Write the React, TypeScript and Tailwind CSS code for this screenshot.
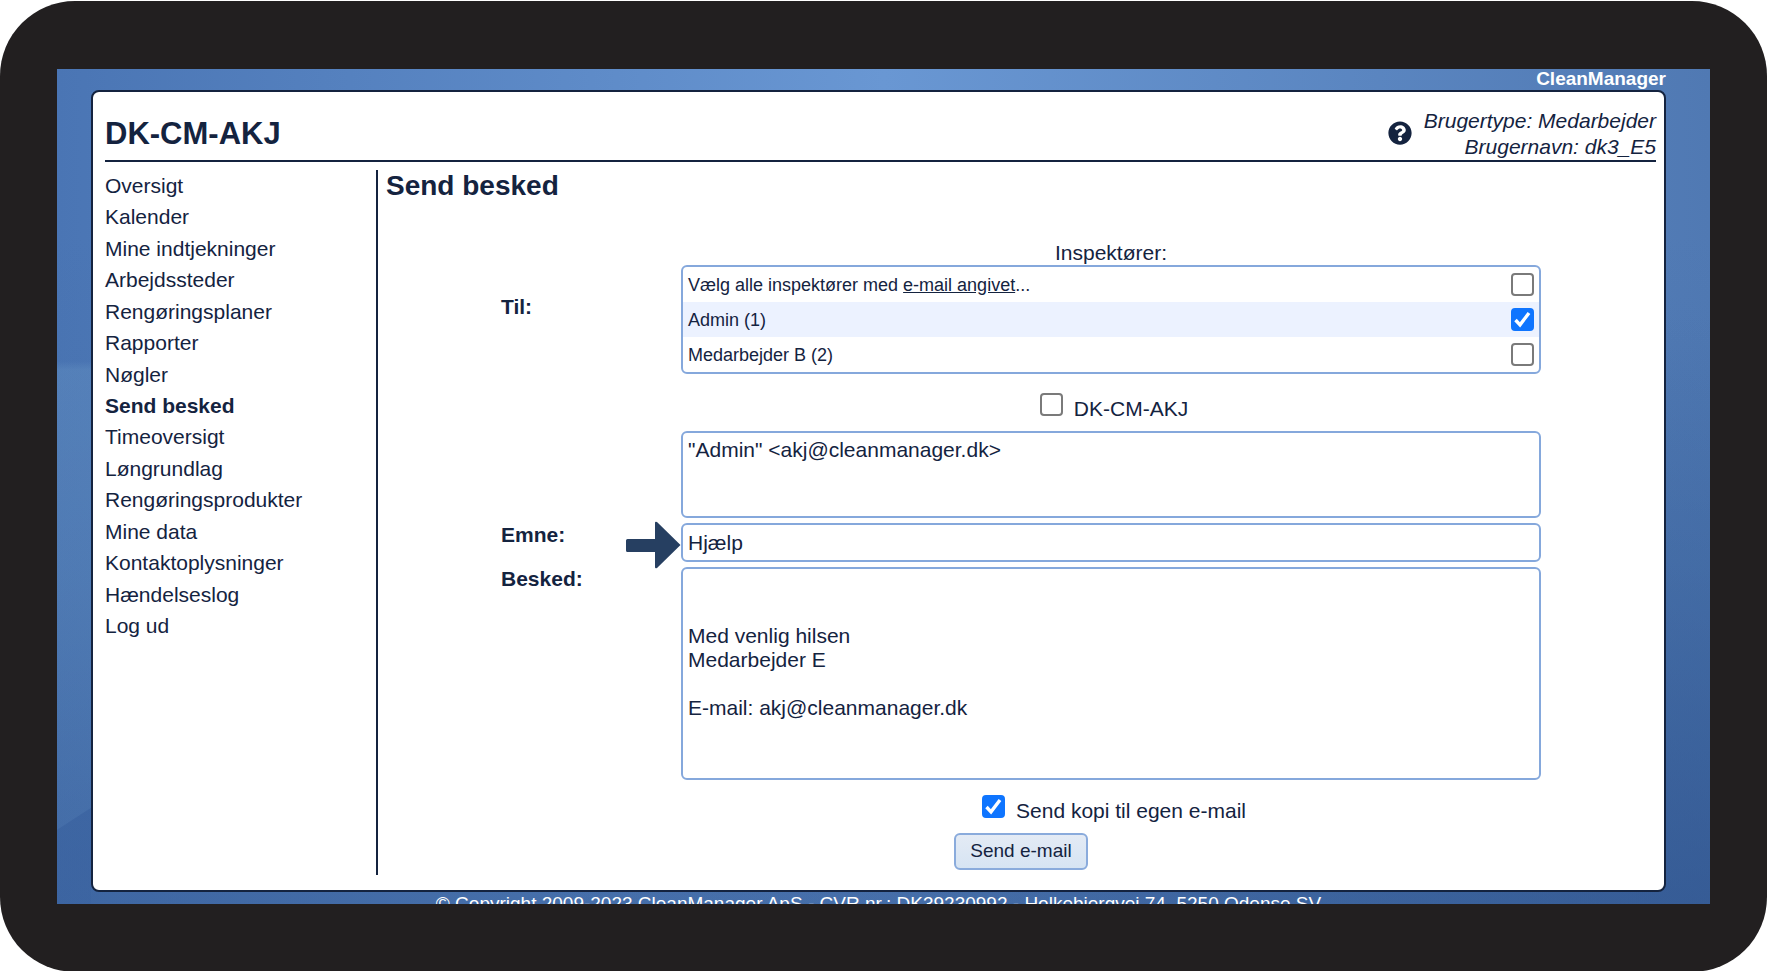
import { useState } from "react";
import { FaQuestionCircle } from "react-icons/fa";

const menuItems = [
  "Oversigt",
  "Kalender",
  "Mine indtjekninger",
  "Arbejdssteder",
  "Rengøringsplaner",
  "Rapporter",
  "Nøgler",
  "Send besked",
  "Timeoversigt",
  "Løngrundlag",
  "Rengøringsprodukter",
  "Mine data",
  "Kontaktoplysninger",
  "Hændelseslog",
  "Log ud",
];

const fieldClass =
  "block w-full resize-none rounded-md border-2 border-[#85a8dc] bg-white px-[5px] leading-6 outline-none";

interface CheckboxProps {
  id: string;
  defaultChecked?: boolean;
}

function Checkbox({ id, defaultChecked = false }: CheckboxProps) {
  const [checked, setChecked] = useState<boolean>(defaultChecked);

  return (
    <span className="relative block size-[23px] shrink-0">
      <input
        id={id}
        type="checkbox"
        checked={checked}
        onChange={(e) => setChecked(e.target.checked)}
        className="block size-full appearance-none rounded-sm border-2 border-[#7a7a7a] bg-white checked:border-[#0f75ff] checked:bg-[#0f75ff]"
      />
      {checked && (
        <svg
          viewBox="0 0 23 23"
          className="pointer-events-none absolute inset-0 size-full"
          fill="none"
          stroke="white"
          strokeWidth="3.4"
          aria-hidden="true"
        >
          <path d="M4.5 12 L9 16.8 L18 5" />
        </svg>
      )}
    </span>
  );
}

function Menu() {
  return (
    <nav className="w-[273px] shrink-0 border-r-2 border-[#14233f]">
      <ul className="grid h-118 auto-rows-fr items-center">
        {menuItems.map((item) => (
          <li key={item} className="leading-6">
            <a href="#" className={item === "Send besked" ? "font-bold" : ""}>
              {item}
            </a>
          </li>
        ))}
      </ul>
    </nav>
  );
}

function Recipients() {
  return (
    <div>
      <p className="text-center leading-6">Inspektører:</p>
      <div className="overflow-hidden rounded-md border-2 border-[#85a8dc] text-lg">
        <div className="flex h-[35px] items-center justify-between px-[5px]">
          <label htmlFor="all">
            Vælg alle inspektører med <span className="underline">e-mail angivet</span>...
          </label>
          <Checkbox id="all" />
        </div>
        <div className="flex h-[35px] items-center justify-between bg-[#ecf2ff] px-[5px]">
          <label htmlFor="admin">Admin (1)</label>
          <Checkbox id="admin" defaultChecked />
        </div>
        <div className="flex h-[35px] items-center justify-between px-[5px]">
          <label htmlFor="employee">Medarbejder B (2)</label>
          <Checkbox id="employee" />
        </div>
      </div>
    </div>
  );
}

function MessageForm() {
  return (
    <form
      className="mx-[115px] mt-[39px] grid grid-cols-[180px_1fr]"
      onSubmit={(e) => e.preventDefault()}
    >
      <label htmlFor="to" className="pt-[54px] font-bold leading-6">
        Til:
      </label>
      <div>
        <Recipients />
        <div className="flex justify-center gap-[11px] pt-[19px] pb-[10px] pl-1.5">
          <Checkbox id="company" />
          <label htmlFor="company" className="pt-1 leading-6">
            DK-CM-AKJ
          </label>
        </div>
        <textarea
          id="to"
          className={`${fieldClass} h-[87px] py-[5px]`}
          defaultValue={'"Admin" <akj@cleanmanager.dk>'}
        />
      </div>

      <label htmlFor="subject" className="pt-[5px] font-bold leading-6">
        Emne:
      </label>
      <div className="relative pt-[5px]">
        <svg
          viewBox="0 0 55 48"
          className="absolute top-[3px] right-full h-12 w-[55px]"
          fill="#263f61"
          aria-hidden="true"
        >
          <path d="M1.500 18 H29 V2 Q29 0 31 1 L54.500 24 L31 47 Q29 48 29 46 V31 H1.500 Q0 31 0 29.500 V19.500 Q0 18 1.500 18 Z" />
        </svg>
        <input id="subject" type="text" className={`${fieldClass} h-[39px]`} defaultValue="Hjælp" />
      </div>

      <label htmlFor="message" className="pt-[5px] font-bold leading-6">
        Besked:
      </label>
      <div className="pt-[5px]">
        <textarea
          id="message"
          className={`${fieldClass} h-[213px] py-[7px]`}
          defaultValue={"\n\nMed venlig hilsen\nMedarbejder E\n\nE-mail: akj@cleanmanager.dk"}
        />
      </div>

      <div className="col-start-2 flex justify-center gap-[11px] pt-[15px] pl-1.5">
        <Checkbox id="copy" defaultChecked />
        <label htmlFor="copy" className="pt-1 leading-6">
          Send kopi til egen e-mail
        </label>
      </div>
      <div className="col-span-2 flex justify-center pt-[10px]">
        <button
          type="submit"
          className="h-[37px] rounded-md border-2 border-[#8aabdc] bg-linear-to-b from-[#e4ebf5] to-[#d6e4f3] px-[14px] text-[19px]"
        >
          Send e-mail
        </button>
      </div>
    </form>
  );
}

export default function App() {
  return (
    <div className="min-h-screen bg-white pt-px font-['Liberation_Sans',Arial,sans-serif] text-[21px] text-[#14233f]">
      <div className="rounded-[75px] bg-[#221f20] px-[57px] py-17">
        <div className="overflow-hidden bg-[linear-gradient(90deg,#4a75b4_0%,#6997d3_50%,#5079b3_100%)]">
          {/* light facets down the left edge, darker towards the bottom right */}
          <div className="pr-11 pl-[34px] [background:linear-gradient(147deg,transparent_18%,rgba(56,96,158,0.6)_19%)_left_bottom/34px_96px_no-repeat,linear-gradient(180deg,transparent_35%,rgba(110,155,200,0.3)_36%,rgba(110,155,200,0.1)_88%)_left_top/34px_100%_no-repeat,radial-gradient(at_right_bottom,rgba(47,84,142,0.6),transparent_50%),linear-gradient(180deg,transparent_20%,rgba(66,108,165,0.4)_60%,rgba(54,92,150,0.6)_100%)]">
            <p className="pb-0.5 text-right text-[19px] leading-[19px] font-bold text-white">
              CleanManager
            </p>

            <main className="rounded-lg border-2 border-[#14233f] bg-white pt-4 pr-2 pb-[15px] pl-3">
              <header className="flex items-center border-b-2 border-[#14233f]">
                <h1 className="grow text-[31px] font-bold">DK-CM-AKJ</h1>
                <a href="#" aria-label="Hjælp" className="pb-0.5">
                  <FaQuestionCircle className="size-6" />
                </a>
                <p className="ml-3 text-right leading-[26px] italic">
                  Brugertype: Medarbejder
                  <br />
                  Brugernavn: dk3_E5
                </p>
              </header>

              <div className="flex pt-2">
                <Menu />
                <section className="grow pb-[5px] pl-2">
                  <h2 className="text-[28px] leading-8 font-bold">Send besked</h2>
                  <MessageForm />
                </section>
              </div>
            </main>

            <footer className="h-3 text-center text-[19px] leading-6 text-white">
              © Copyright 2009-2023 CleanManager ApS - CVR nr.: DK39230992 - Holkebjergvej 74, 5250 Odense SV
            </footer>
          </div>
        </div>
      </div>
    </div>
  );
}
